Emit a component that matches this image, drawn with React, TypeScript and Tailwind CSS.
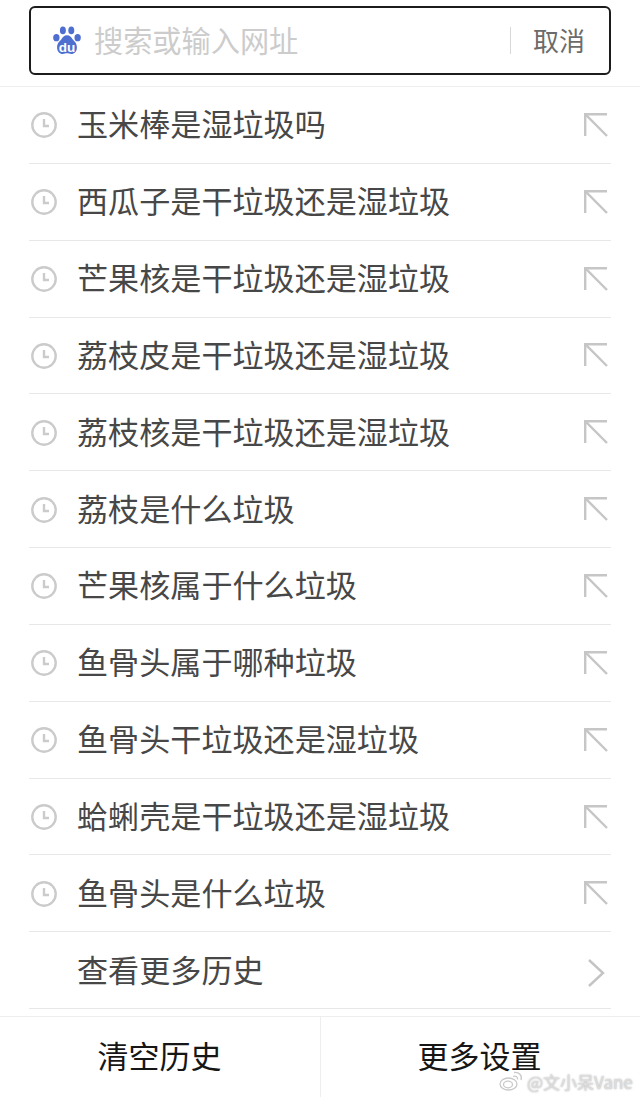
const historyItems = [
  "玉米棒是湿垃圾吗",
  "西瓜子是干垃圾还是湿垃圾",
  "芒果核是干垃圾还是湿垃圾",
  "荔枝皮是干垃圾还是湿垃圾",
  "荔枝核是干垃圾还是湿垃圾",
  "荔枝是什么垃圾",
  "芒果核属于什么垃圾",
  "鱼骨头属于哪种垃圾",
  "鱼骨头干垃圾还是湿垃圾",
  "蛤蜊壳是干垃圾还是湿垃圾",
  "鱼骨头是什么垃圾",
];

function BaiduLogo() {
  return (
    <svg width="28" height="30" viewBox="0 0 30 31" className="mb-[2px] mr-[1px] shrink-0">
      <g fill="#4e6fd0">
        <ellipse cx="3.6" cy="13" rx="3.4" ry="3.9" />
        <ellipse cx="10.6" cy="5.2" rx="3.2" ry="4.1" />
        <ellipse cx="19.6" cy="5.2" rx="3.2" ry="4.1" />
        <ellipse cx="26.4" cy="13" rx="3.4" ry="3.9" />
        <path d="M15 10.500c-3 0-4.600 2.300-6 4.200-1.700 2.200-4.600 3.600-4.600 8.800C4.400 27.800 7 30.500 10.500 30.500c1.800 0 3-.7 4.500-.7s2.700.7 4.500.7c3.500 0 6.100-2.700 6.100-7 0-5.200-2.900-6.600-4.600-8.800-1.400-1.900-3-4.200-6-4.200z" />
      </g>
      <text x="15" y="28" textAnchor="middle" fontSize="14.500" fontWeight="700" fontFamily="Liberation Sans, sans-serif" fill="#ffffff">
        du
      </text>
    </svg>
  );
}

function ClockIcon() {
  return (
    <svg width="26" height="26" viewBox="0 0 26 26" fill="none" stroke="#cbcbcb" className="shrink-0">
      <circle cx="13" cy="13" r="11.700" strokeWidth="2.400" />
      <path d="M13 7v7h5" strokeWidth="2.400" />
    </svg>
  );
}

function FillArrow() {
  return (
    <svg width="24" height="24" viewBox="0 0 24 24" fill="none" stroke="#c6c6c6" strokeWidth="2.400">
      <path d="M23 1.200H1.200V23" />
      <path d="M1.200 1.200l21.800 21.800" />
    </svg>
  );
}

function WeiboMark() {
  return (
    <svg width="24" height="20" viewBox="0 0 24 20" fill="none" stroke="#c9c9c9" strokeWidth="1.300">
      <ellipse cx="9.500" cy="13" rx="8.500" ry="6" />
      <ellipse cx="9" cy="13.500" rx="4.500" ry="3.300" />
      <path d="M14 5.500c3-1 5 .5 4.500 3" />
      <path d="M15 1.500c5-1 8.500 3 7 7.500" />
    </svg>
  );
}

export default function App() {
  return (
    <div className="relative h-[1097px] w-[640px] overflow-hidden bg-white font-['Noto_Sans_CJK_SC',sans-serif]">
      <div className="h-[87px] border-b border-[#eeeeee] pl-[29px] pr-[29px] pt-[6px]">
        <div className="flex h-[69px] items-center rounded-[6px] border-2 border-[#1c1c1c] pl-[22px] pr-[24px]">
          <BaiduLogo />
          <span className="ml-[12px] flex-1 pb-[2px] text-[29.200px] leading-none text-[#cccccc]">搜索或输入网址</span>
          <div className="mr-[22px] h-[27px] w-px bg-[#d8d8d8]" />
          <span className="pb-[2px] text-[26px] leading-none text-[#6b6b6b]">取消</span>
        </div>
      </div>

      <ul className="mx-[29px]">
        {historyItems.map((item) => (
          <li key={item} className="flex h-[76.85px] items-center border-b border-[#e8e8e8]">
            <div className="ml-[2px] w-[47px] pt-[1px]">
              <ClockIcon />
            </div>
            <span className="-ml-[1px] flex-1 pb-[4px] text-[31.100px] leading-none text-[#474747]">{item}</span>
            <div className="mr-[3px]">
              <FillArrow />
            </div>
          </li>
        ))}
        <li className="flex h-[76.85px] items-center border-b border-[#e8e8e8] pl-[49px]">
          <span className="-ml-[1px] flex-1 pb-[4px] text-[31.100px] leading-none text-[#474747]">查看更多历史</span>
          <svg width="18" height="28" viewBox="0 0 18 28" fill="none" stroke="#c4c4c4" strokeWidth="2.400" className="mr-[6px] mt-[6px]">
            <path d="M2 1l14 13L2 27" />
          </svg>
        </li>
      </ul>

      <div className="mt-[7px] flex h-[81px] border-t border-[#eeeeee]">
        <div className="flex w-[321px] items-center justify-center border-r border-[#eeeeee] pb-[5px] pr-[1px] text-[31px] leading-none text-[#161616]">
          清空历史
        </div>
        <div className="flex flex-1 items-center justify-center pb-[5px] pr-[2px] text-[31px] leading-none text-[#161616]">
          更多设置
        </div>
      </div>

      <div className="absolute left-[499px] top-[1071px] flex items-center gap-[4px] text-[17px] leading-none text-[#dddddd] [text-shadow:0_0_2px_#a8a8a8]">
        <WeiboMark />
        <span>@文小呆Vane</span>
      </div>
    </div>
  );
}
